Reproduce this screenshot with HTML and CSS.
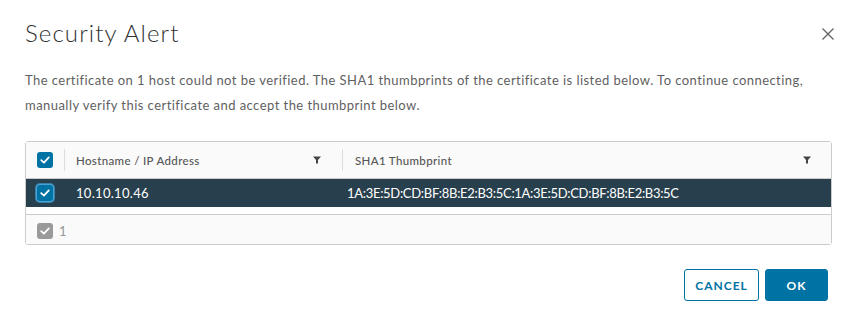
FILE: index.html
```html
<!DOCTYPE html>
<html>
<head>
<meta charset="utf-8">
<link rel="stylesheet" href="styles.css">
</head>
<body>
<div class="modal">
  <div class="modal-header">
    <h3 class="modal-title">Security Alert</h3>
    <button class="close" aria-label="Close">
      <svg width="12" height="12" viewBox="0 0 12 12"><path d="M0.5 0.5 L11.5 11.5 M11.5 0.5 L0.5 11.5" stroke="#666" stroke-width="1.4" fill="none"/></svg>
    </button>
  </div>
  <p class="message">The certificate on 1 host could not be verified. The SHA1 thumbprints of the certificate is listed below. To continue connecting, manually verify this certificate and accept the thumbprint below.</p>
  <div class="grid">
    <div class="grid-head">
      <div class="cell-check"><span class="cb cb-on"><svg viewBox="0 0 16 16" width="16" height="16"><path d="M4.2 8.2 L6.9 10.6 L11.8 5.4" stroke="#fff" stroke-width="1.8" fill="none" stroke-linecap="round" stroke-linejoin="round"/></svg></span></div>
      <div class="col col-host"><span class="col-label">Hostname / IP Address</span><span class="filter"><svg width="8" height="8" viewBox="0 0 8 8"><path d="M0 0.5 H8 L5 4 V7.5 L3 7.5 V4 Z" fill="#444"/></svg></span></div>
      <div class="col col-thumb"><span class="col-label">SHA1 Thumbprint</span><span class="filter"><svg width="8" height="8" viewBox="0 0 8 8"><path d="M0 0.5 H8 L5 4 V7.5 L3 7.5 V4 Z" fill="#444"/></svg></span></div>
    </div>
    <div class="grid-body">
      <div class="row selected">
        <div class="cell-check"><span class="cb cb-on cb-focus"><svg viewBox="0 0 16 16" width="16" height="16"><path d="M4.2 8.2 L6.9 10.6 L11.8 5.4" stroke="#fff" stroke-width="1.8" fill="none" stroke-linecap="round" stroke-linejoin="round"/></svg></span></div>
        <div class="cell cell-host">10.10.10.46</div>
        <div class="cell cell-thumb">1A:3E:5D:CD:BF:8B:E2:B3:5C:1A:3E:5D:CD:BF:8B:E2:B3:5C</div>
      </div>
    </div>
    <div class="grid-foot">
      <span class="cb cb-gray"><svg viewBox="0 0 16 16" width="16" height="16"><path d="M4.2 8.2 L6.9 10.6 L11.8 5.4" stroke="#fff" stroke-width="1.8" fill="none" stroke-linecap="round" stroke-linejoin="round"/></svg></span>
      <span class="foot-count">1</span>
    </div>
  </div>
  <div class="modal-footer">
    <button class="btn btn-outline">Cancel</button>
    <button class="btn btn-primary">OK</button>
  </div>
</div>
</body>
</html>
```

FILE: styles.css
```css
html, body {
  margin: 0;
  padding: 0;
  background: #fff;
}
body {
  font-family: Lato, "Noto Sans", sans-serif;
  color: #565656;
}
.modal {
  width: 856px;
  height: 326px;
  box-sizing: border-box;
  padding: 16px 21px 0 25px;
}
.modal-header {
  display: flex;
  justify-content: space-between;
  align-items: center;
  height: 34px;
}
.modal-title {
  margin: 0;
  font-size: 24px;
  font-weight: 300;
  letter-spacing: 1.1px;
  color: #313131;
  line-height: 34px;
}
.close {
  border: 0;
  background: none;
  padding: 0;
  width: 12px;
  height: 12px;
  margin-right: 1px;
  margin-top: 2px;
  display: flex;
}
.message {
  margin: 18px 0 0 0;
  font-size: 13px;
  line-height: 25px;
  letter-spacing: 0.45px;
  color: #5f5f5f;
  width: 812px;
}
.grid {
  margin-top: 23px;
  width: 807px;
  border: 1px solid #ccc;
  border-radius: 3px;
  box-sizing: border-box;
}
.grid-head {
  display: flex;
  height: 36px;
  background: #fafafa;
  border-bottom: 1px solid #ccc;
  align-items: center;
}
.cell-check {
  width: 38px;
  display: flex;
  align-items: center;
  padding-left: 11px;
  box-sizing: border-box;
}
.cb {
  width: 16px;
  height: 16px;
  border-radius: 3px;
  display: block;
}
.cb svg { display: block; }
.cb-on { background: #0072a3; }
.cb-focus { box-shadow: 0 0 0 1px #4aa3d6, 0 0 0 2px #3b7fa6; }
.cb-gray { background: #9a9a9a; }
.col {
  display: flex;
  align-items: center;
  justify-content: space-between;
  height: 22px;
  border-left: 1px solid #ddd;
  box-sizing: border-box;
  font-size: 11.5px;
  font-weight: 500;
  color: #565656;
  letter-spacing: 0.35px;
}
.col-host {
  width: 278px;
  padding: 0 21px 0 11px;
}
.col-thumb {
  flex: 1;
  padding: 0 20px 0 12px;
}
.filter { display: flex; }
.grid-body {
  height: 35px;
  background: #fff;
}
.row {
  display: flex;
  height: 28px;
  align-items: center;
}
.selected {
  background: #28404d;
  color: #fff;
}
.cell {
  font-size: 13px;
  letter-spacing: 0.3px;
}
.cell-host {
  width: 278px;
  padding-left: 12px;
  box-sizing: border-box;
}
.cell-thumb {
  padding-left: 5px;
  letter-spacing: -0.3px;
}
.grid-foot {
  display: flex;
  align-items: center;
  height: 30px;
  box-sizing: border-box;
  padding-top: 2px;
  background: #fafafa;
  border-top: 1px solid #ccc;
  padding-left: 11px;
}
.foot-count {
  margin-left: 6px;
  font-size: 13px;
  color: #999;
}
.modal-footer {
  display: flex;
  justify-content: flex-end;
  gap: 6px;
  margin-top: 24px;
  padding-right: 7px;
}
.btn {
  height: 32px;
  box-sizing: border-box;
  border-radius: 3px;
  font-family: Lato, "Noto Sans", sans-serif;
  font-size: 12px;
  font-weight: 700;
  letter-spacing: 1px;
  text-transform: uppercase;
  cursor: pointer;
}
.btn-outline {
  width: 75px;
  background: #fff;
  border: 1px solid #0072a3;
  color: #0072a3;
}
.btn-primary {
  width: 63px;
  background: #0072a3;
  border: 1px solid #0072a3;
  color: #fff;
}
```
